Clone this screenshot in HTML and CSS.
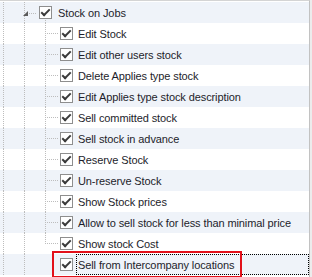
FILE: index.html
```
<!DOCTYPE html>
<html lang="en">
<head>
    <meta charset="UTF-8">
    <title>Stock permissions</title>
    <link rel="stylesheet" href="styles.css">
</head>
<body>

    <div class="tree">
        <div class="row alt parent">
            <span class="cell vline"></span>
            <span class="cell expander vline"><span class="arrow"></span></span>
            <span class="check"></span>
            <span class="label">Stock on Jobs</span>
        </div>
        <div class="row">
            <span class="cell vline"></span><span class="cell wide vline"></span><span class="cell branch"></span>
            <span class="check"></span>
            <span class="label">Edit Stock</span>
        </div>
        <div class="row alt">
            <span class="cell vline"></span><span class="cell wide vline"></span><span class="cell branch"></span>
            <span class="check"></span>
            <span class="label">Edit other users stock</span>
        </div>
        <div class="row">
            <span class="cell vline"></span><span class="cell wide vline"></span><span class="cell branch"></span>
            <span class="check"></span>
            <span class="label">Delete Applies type stock</span>
        </div>
        <div class="row alt">
            <span class="cell vline"></span><span class="cell wide vline"></span><span class="cell branch"></span>
            <span class="check"></span>
            <span class="label">Edit Applies type stock description</span>
        </div>
        <div class="row">
            <span class="cell vline"></span><span class="cell wide vline"></span><span class="cell branch"></span>
            <span class="check"></span>
            <span class="label">Sell committed stock</span>
        </div>
        <div class="row alt">
            <span class="cell vline"></span><span class="cell wide vline"></span><span class="cell branch"></span>
            <span class="check"></span>
            <span class="label">Sell stock in advance</span>
        </div>
        <div class="row">
            <span class="cell vline"></span><span class="cell wide vline"></span><span class="cell branch"></span>
            <span class="check"></span>
            <span class="label">Reserve Stock</span>
        </div>
        <div class="row alt">
            <span class="cell vline"></span><span class="cell wide vline"></span><span class="cell branch"></span>
            <span class="check"></span>
            <span class="label">Un-reserve Stock</span>
        </div>
        <div class="row">
            <span class="cell vline"></span><span class="cell wide vline"></span><span class="cell branch"></span>
            <span class="check"></span>
            <span class="label">Show Stock prices</span>
        </div>
        <div class="row alt">
            <span class="cell vline"></span><span class="cell wide vline"></span><span class="cell branch"></span>
            <span class="check"></span>
            <span class="label">Allow to sell stock for less than minimal price</span>
        </div>
        <div class="row">
            <span class="cell vline"></span><span class="cell wide vline"></span><span class="cell branch last"></span>
            <span class="check"></span>
            <span class="label">Show stock Cost</span>
        </div>
        <div class="row alt">
            <span class="cell vline"></span><span class="cell wide vline"></span><span class="cell"></span>
            <span class="check"></span>
            <span class="label focused">Sell from Intercompany locations</span>
        </div>

        <div class="highlight"></div>
    </div>

</body>
</html>
```

FILE: styles.css
```
body {
    margin: 0;
    background-color: #ececec;
    font-family: Tahoma, "Liberation Sans", Arial, sans-serif;
}
.tree {
    position: relative;
    width: 310px;
    height: 277px;
    box-sizing: border-box;
    padding-top: 1px;
    border-top: 1px solid #d4d4d4;
    border-right: 1px solid #c2c2c2;
    background-color: #fff;
}
.row {
    display: flex;
    align-items: center;
    height: 21px;
    background-color: #fff;
}
.row.alt {
    background-color: #eff3f9;
}
.row.parent {
    background: repeating-linear-gradient(#bdbdbd 0 1px, transparent 1px 2px) 45px 18px / 1px 3px no-repeat, #eff3f9;
}
.cell {
    flex: none;
    align-self: stretch;
    width: 21px;
}
.vline {
    background: repeating-linear-gradient(#bdbdbd 0 1px, transparent 1px 2px) 3px 0 / 1px 100% no-repeat;
}
.expander {
    width: 16px;
    background:
        repeating-linear-gradient(#bdbdbd 0 1px, transparent 1px 2px) 3px 0 / 1px 100% no-repeat,
        repeating-linear-gradient(to right, #bdbdbd 0 1px, transparent 1px 2px) 8px 11px / 8px 1px no-repeat;
}
.arrow {
    display: block;
    width: 0;
    height: 0;
    margin: 9px 0 0 2px;
    border-left: 5px solid transparent;
    border-bottom: 5px solid #5b5b5b;
}
.branch {
    width: 16px;
    background:
        repeating-linear-gradient(#bdbdbd 0 1px, transparent 1px 2px) 3px 0 / 1px 100% no-repeat,
        repeating-linear-gradient(to right, #bdbdbd 0 1px, transparent 1px 2px) 5px 10px / 11px 1px no-repeat;
}
.branch.last {
    background:
        repeating-linear-gradient(#bdbdbd 0 1px, transparent 1px 2px) 3px 0 / 1px 11px no-repeat,
        repeating-linear-gradient(to right, #bdbdbd 0 1px, transparent 1px 2px) 5px 10px / 11px 1px no-repeat;
}
.row .cell:nth-child(3):not(.branch) {
    width: 16px;
}
.check {
    flex: none;
    position: relative;
    width: 13px;
    height: 13px;
    box-sizing: border-box;
    margin-left: 2px;
    border: 1px solid #8e8e8e;
    background-color: #fff;
}
.check::after {
    content: "";
    position: absolute;
    left: 3px;
    top: 0px;
    width: 3px;
    height: 7px;
    border-right: 2px solid #3a3a3a;
    border-bottom: 2px solid #3a3a3a;
    transform: rotate(45deg);
}
.label {
    flex: 1;
    align-self: stretch;
    display: flex;
    align-items: center;
    margin-left: 3px;
    padding-left: 2px;
    font-size: 11px;
    letter-spacing: -0.1px;
    color: #1d1d2b;
    white-space: nowrap;
}
.parent .label {
    margin-left: 4px;
}
.label.focused {
    outline: 1px dotted #000;
    outline-offset: -1px;
}
.highlight {
    position: absolute;
    left: 52px;
    top: 250px;
    width: 190px;
    height: 27px;
    box-sizing: border-box;
    border: 2px solid #e2101a;
}
```
